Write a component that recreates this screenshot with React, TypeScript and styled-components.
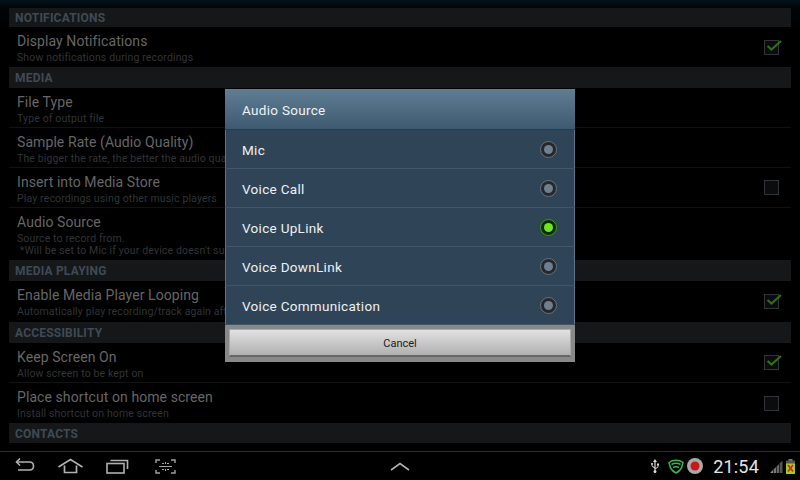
import styled, { createGlobalStyle } from 'styled-components';

const GlobalStyle = createGlobalStyle`
  html, body {
    margin: 0;
    padding: 0;
    background: #000;
    overflow: hidden;
  }
  * {
    box-sizing: border-box;
  }
`;

const Screen = styled.div`
  position: relative;
  width: 800px;
  height: 480px;
  display: flex;
  flex-direction: column;
  background: #000;
  font-family: Roboto, 'Liberation Sans', sans-serif;
  overflow: hidden;
`;

const SettingsList = styled.div`
  height: 451px;
  padding: 8px 9px 0;
  background: linear-gradient(#03121a 0, #010508 8px, #000 30px);
  overflow: hidden;
`;

const SectionHeader = styled.div<{ $height: number }>`
  height: ${(p) => p.$height}px;
  display: flex;
  align-items: center;
  padding: 1px 0 0 6px;
  background: #151719;
  color: #3f4a56;
  font-size: 12px;
  font-weight: 700;
  letter-spacing: 0.2px;
`;

const Row = styled.div<{ $height?: number; $last?: boolean }>`
  position: relative;
  height: ${(p) => p.$height ?? 40}px;
  padding: 6px 0 0 8px;
  display: flex;
  border-bottom: ${(p) => (p.$last ? 'none' : '1px solid #101214')};
`;

const RowText = styled.div`
  flex: 1;
  min-width: 0;
`;

const RowTitle = styled.div`
  color: #666;
  font-size: 14px;
  line-height: 17px;
  letter-spacing: 0.08px;
`;

const RowSummary = styled.div`
  margin-top: 2px;
  color: #303437;
  font-size: 10.5px;
  line-height: 12px;
  letter-spacing: 0.14px;
  white-space: pre;
`;

const CheckBox = styled.div`
  position: relative;
  flex: none;
  align-self: center;
  width: 15px;
  height: 15px;
  margin-right: 12px;
  margin-top: -6px;
  border: 1px solid #303437;
  background: #0a0c0e;
`;

const CheckMark = styled.svg`
  position: absolute;
  left: 1px;
  top: -3px;
`;

const NavBar = styled.div`
  height: 29px;
  display: grid;
  grid-template-columns: 1fr auto 1fr;
  align-items: center;
  border-top: 1px solid #173440;
  background: #000;
`;

const NavGroup = styled.div`
  display: flex;
  align-items: center;
  gap: 23px;
  padding-left: 15px;
`;

const StatusGroup = styled.div`
  display: flex;
  align-items: center;
  justify-content: flex-end;
  gap: 3px;
  padding-right: 5px;
`;

const UsbSlot = styled.span`
  display: flex;
  margin-right: 5px;
`;

const Clock = styled.span`
  color: #e4e4e4;
  font-size: 18px;
  letter-spacing: 0.2px;
  margin: 0 8px 0 7px;
`;

const Dialog = styled.div`
  position: absolute;
  left: 225px;
  top: 89px;
  width: 350px;
  height: 273px;
  display: flex;
  flex-direction: column;
  background: #2f4557;
  box-shadow: inset 1px 0 0 #5f7488, inset -1px 0 0 #5f7488;
`;

const DialogTitle = styled.div`
  height: 41px;
  display: flex;
  align-items: center;
  padding: 2px 0 0 17px;
  background: linear-gradient(#5f7d93, #3d5a70);
  border-bottom: 1px solid #293b4a;
  color: #f0f2f4;
  font-size: 13.5px;
  letter-spacing: 0.3px;
`;

const Option = styled.div`
  height: 39px;
  flex: none;
  display: flex;
  align-items: center;
  justify-content: space-between;
  padding: 0 18px 0 17px;
  border-bottom: 1px solid #415768;
  color: #eef0f2;
  font-size: 13.5px;
  letter-spacing: 0.3px;

  &:last-of-type {
    border-bottom: none;
  }
`;

const OptionLabel = styled.span`
  margin-top: 2px;
`;

const Radio = styled.span<{ $on?: boolean }>`
  width: 17px;
  height: 17px;
  display: flex;
  align-items: center;
  justify-content: center;
  border-radius: 50%;
  background: ${(p) => (p.$on ? '#0c2a10' : '#24282d')};
  border: 1px solid ${(p) => (p.$on ? '#3f9a1f' : '#6a737b')};

  &::after {
    content: '';
    width: 9px;
    height: 9px;
    border-radius: 50%;
    background: ${(p) => (p.$on ? '#6fe51f' : '#6f7f8e')};
  }
`;

const ButtonBar = styled.div`
  flex: 1;
  padding: 4px 4px 5px;
  background: #87898a;
`;

const CancelButton = styled.div`
  height: 28px;
  display: flex;
  align-items: center;
  justify-content: center;
  padding-top: 1px;
  background: linear-gradient(#e2e2e2, #b0b0b0);
  border: 1px solid #a9a9a9;
  border-bottom: 2px solid #666;
  color: #1c1c1c;
  font-size: 11px;
`;

const settings = [
  { header: 'NOTIFICATIONS', h: 19 },
  { title: 'Display Notifications', summary: 'Show notifications during recordings', check: true, last: true },
  { header: 'MEDIA', h: 21 },
  { title: 'File Type', summary: 'Type of output file' },
  { title: 'Sample Rate (Audio Quality)', summary: 'The bigger the rate, the better the audio quality' },
  { title: 'Insert into Media Store', summary: 'Play recordings using other music players', check: false },
  {
    title: 'Audio Source',
    summary: "Source to record from.\n *Will be set to Mic if your device doesn't support it",
    height: 52,
    last: true,
  },
  { header: 'MEDIA PLAYING', h: 21 },
  { title: 'Enable Media Player Looping', summary: 'Automatically play recording/track again after it ends', check: true, height: 41, last: true },
  { header: 'ACCESSIBILITY', h: 21 },
  { title: 'Keep Screen On', summary: 'Allow screen to be kept on', check: true },
  { title: 'Place shortcut on home screen', summary: 'Install shortcut on home screen', check: false, last: true },
  { header: 'CONTACTS', h: 20 },
];

const sources = ['Mic', 'Voice Call', 'Voice UpLink', 'Voice DownLink', 'Voice Communication'];

function BackIcon() {
  return (
    <svg width="20" height="16" viewBox="0 0 20 16" fill="none" stroke="#b0b0b0" strokeWidth="1.6">
      <path d="M1.5 4h13c2.5 0 4 1.6 4 4s-1.5 4-4 4H3" />
      <path d="M5 0.5L1.5 4L5 7.5" />
    </svg>
  );
}

function HomeIcon() {
  return (
    <svg width="25" height="16" viewBox="0 0 25 16" fill="none" stroke="#b0b0b0" strokeWidth="1.7">
      <path d="M0.5 9L12.5 1.5L24.5 9" />
      <path d="M6.5 7.5V14.5H18.5V7.5" />
    </svg>
  );
}

function RecentIcon() {
  return (
    <svg width="23" height="16" viewBox="0 0 23 16" fill="none" stroke="#b0b0b0" strokeWidth="1.6">
      <rect x="1" y="5.5" width="17" height="9.5" />
      <path d="M4.5 2.5H21.5V11" />
    </svg>
  );
}

function ScreenshotIcon() {
  return (
    <svg width="24" height="15" viewBox="-3 0 24 15" fill="none" stroke="#a0a0a0" strokeWidth="1.4">
      <path d="M1 4V1H5M16 1H20V4M1 11V14H5M16 14H20V11" />
      <path d="M7 4.5h2M12 4.5h2M7 10.5h2M12 10.5h2M10.5 3v2M10.5 10v2M4 7.5h13" strokeWidth="1" />
    </svg>
  );
}

function UpChevron() {
  return (
    <svg width="20" height="9" viewBox="0 0 20 9" fill="none" stroke="#b0b0b0" strokeWidth="1.6">
      <path d="M1 8L10 1.5L19 8" />
    </svg>
  );
}

function UsbIcon() {
  return (
    <svg width="10" height="14" viewBox="0 0 10 14" fill="#d8d8d8">
      <path d="M5 0L7 3H5.6V9.2L7.6 7.6V6.4H7V4.6H9V6.4H8.4V8L5.6 10.3V11.3A1.4 1.4 0 1 1 4.4 11.3V9.4L1.6 7V5.7A1 1 0 1 1 2.4 5.7V6.6L4.4 8.2V3H3Z" />
    </svg>
  );
}

function ShieldIcon() {
  return (
    <svg width="16" height="15" viewBox="0 0 16 15" fill="none" stroke="#39b54a" strokeWidth="1.5">
      <path d="M1 3.5C5 0.5 11 0.5 15 3.5L13.5 9C12 11.5 10 13 8 14C6 13 4 11.5 2.5 9Z" />
      <path d="M3.5 5.5C6 4 10 4 12.5 5.5" />
      <path d="M5 8.5C7 7.4 9 7.4 11 8.5" />
    </svg>
  );
}

function RecordIcon() {
  return (
    <svg width="16" height="16" viewBox="0 0 16 16">
      <circle cx="8" cy="8" r="8" fill="#a9a9a9" />
      <circle cx="8" cy="8" r="4.5" fill="#c8181c" />
    </svg>
  );
}

function SignalIcon() {
  return (
    <svg width="13" height="13" viewBox="0 0 13 13">
      <path d="M0 13L3 10V13Z" fill="#8a8a8a" />
      <path d="M3.6 9.4L6 7V13H3.6Z" fill="#777" />
      <path d="M6.6 6.4L9 4V13H6.6Z" fill="#666" />
      <path d="M9.6 3.4L12.5 0.5V13H9.6Z" fill="#555" />
    </svg>
  );
}

function BatteryIcon() {
  return (
    <svg width="9" height="15" viewBox="0 0 9 15">
      <rect x="2.5" y="0" width="4" height="2" fill="#777" />
      <rect x="0" y="1.5" width="9" height="13.5" fill="#555" />
      <rect x="0" y="4.5" width="9" height="10.5" fill="#a6c92a" />
      <path d="M2 6L7 12.5M7 6L2 12.5" stroke="#d8261c" strokeWidth="1.8" />
    </svg>
  );
}

export default function App() {
  return (
    <Screen>
      <GlobalStyle />
      <SettingsList>
        {settings.map((item) =>
          item.header ? (
            <SectionHeader key={item.header} $height={item.h ?? 20}>
              {item.header}
            </SectionHeader>
          ) : (
            <Row key={item.title} $height={item.height} $last={item.last}>
              <RowText>
                <RowTitle>{item.title}</RowTitle>
                <RowSummary>{item.summary}</RowSummary>
              </RowText>
              {item.check !== undefined && (
                <CheckBox>
                  {item.check && (
                    <CheckMark width="17" height="15" viewBox="0 0 17 15" fill="none" stroke="#2f6e18" strokeWidth="2.2">
                      <path d="M1.5 8L5.5 11.5L15 3" />
                    </CheckMark>
                  )}
                </CheckBox>
              )}
            </Row>
          ),
        )}
      </SettingsList>
      <NavBar>
        <NavGroup>
          <BackIcon />
          <HomeIcon />
          <RecentIcon />
          <ScreenshotIcon />
        </NavGroup>
        <UpChevron />
        <StatusGroup>
          <UsbSlot>
            <UsbIcon />
          </UsbSlot>
          <ShieldIcon />
          <RecordIcon />
          <Clock>21:54</Clock>
          <SignalIcon />
          <BatteryIcon />
        </StatusGroup>
      </NavBar>
      <Dialog>
        <DialogTitle>Audio Source</DialogTitle>
        {sources.map((source) => (
          <Option key={source}>
            <OptionLabel>{source}</OptionLabel>
            <Radio $on={source === 'Voice UpLink'} />
          </Option>
        ))}
        <ButtonBar>
          <CancelButton>Cancel</CancelButton>
        </ButtonBar>
      </Dialog>
    </Screen>
  );
}
